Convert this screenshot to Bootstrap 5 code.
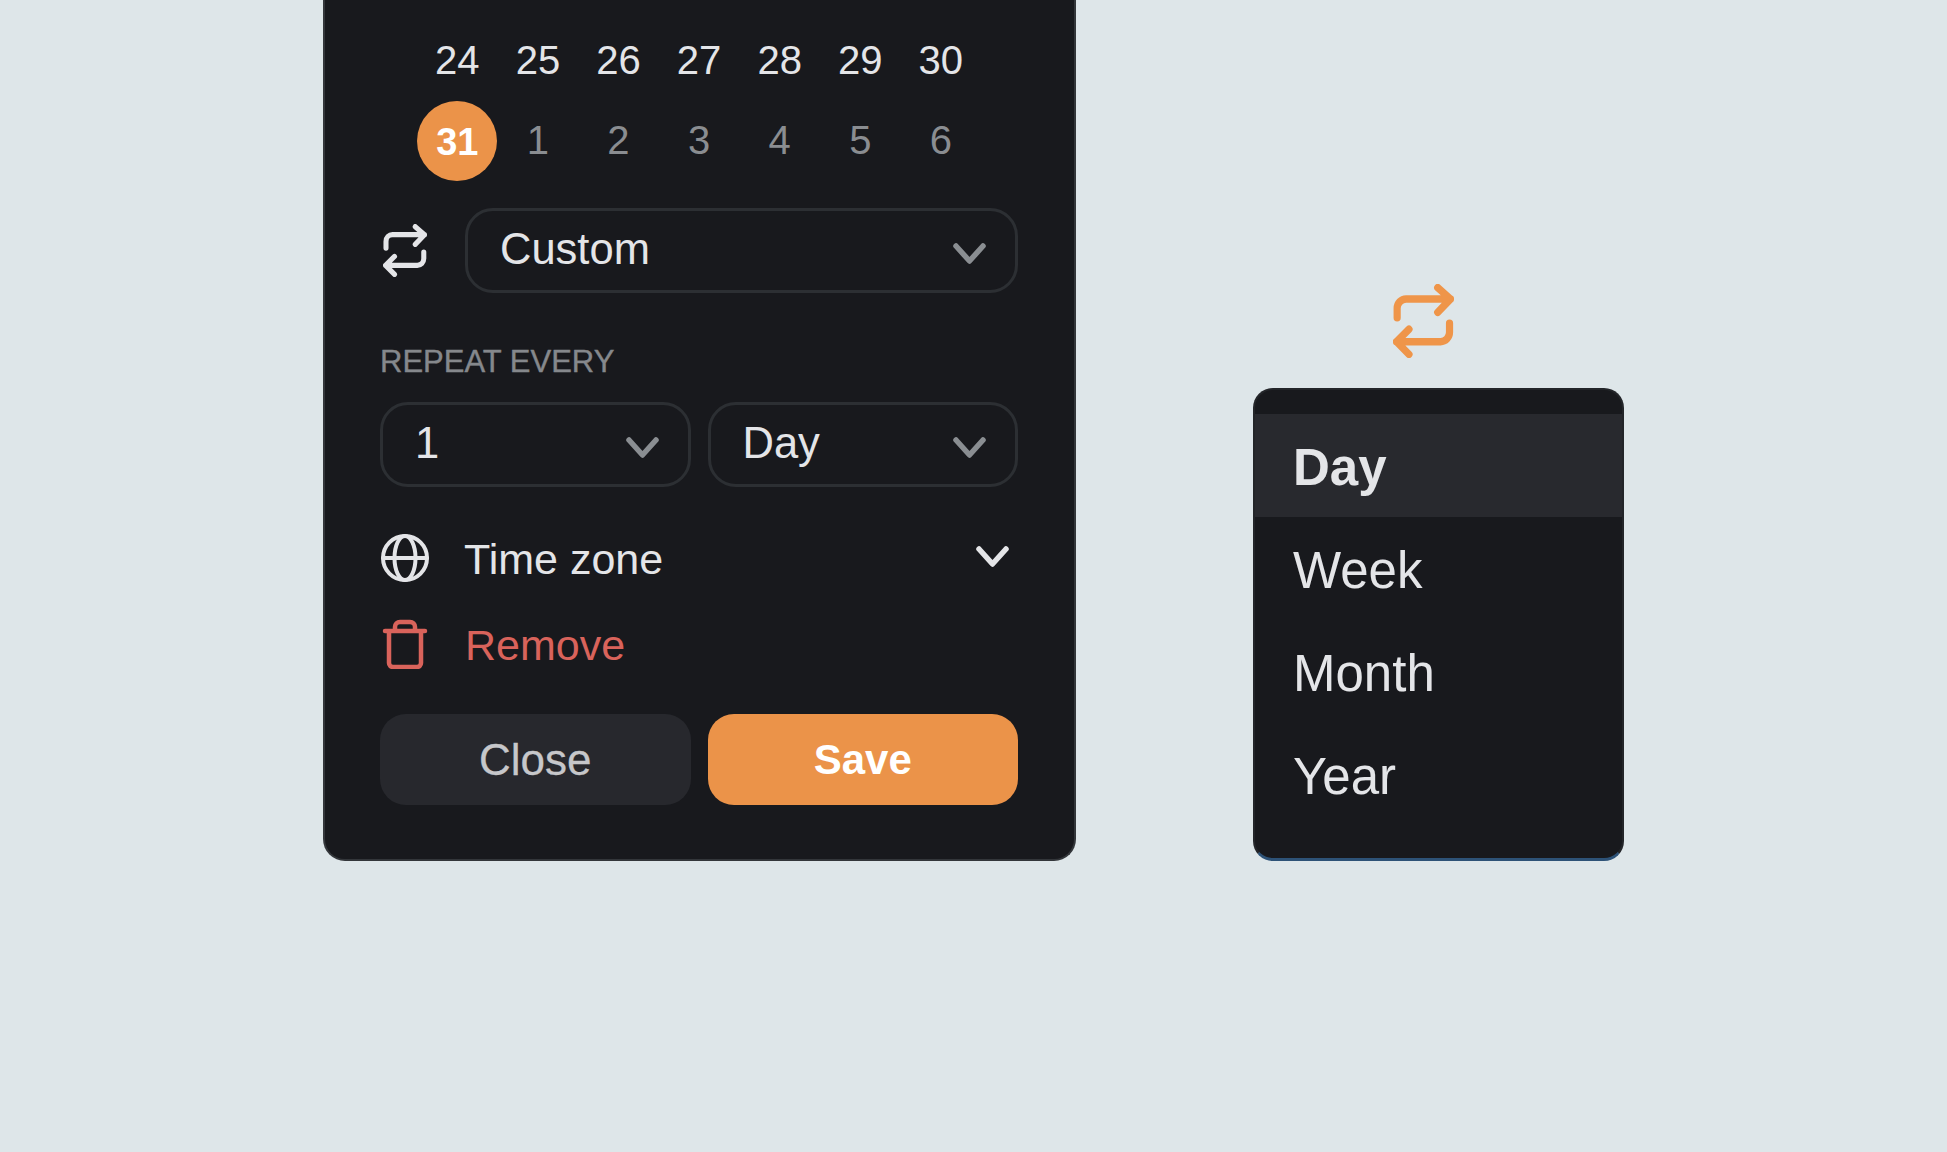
<!DOCTYPE html>
<html lang="en">
<head>
<meta charset="utf-8">
<title>Repeat picker</title>
<link rel="stylesheet" href="https://cdn.jsdelivr.net/npm/bootstrap@5.3.0/dist/css/bootstrap.min.css">
<style>
html,body{height:100%;margin:0}
body{background:#dee6e9;font-family:"Liberation Sans",Arial,sans-serif;color:#e4e5e8;overflow:hidden}
.stage{height:1152px;width:1947px;padding-left:323px;padding-right:322px;align-items:flex-end;padding-bottom:291px;gap:177px}
.panel{width:753px;height:861px;background:#18191d;border:2px solid #33363a;border-top:0;border-radius:0 0 22px 22px;padding:0 56px 0 55px;flex:none}
.cal-row{display:grid;grid-template-columns:repeat(7,80.6px);padding-left:37px;height:81px;align-items:center;font-size:40px;line-height:1;text-align:center}
.cal-first{margin-top:19px}
.muted-days{color:#8a8d91;margin-top:-2px}
.today{width:80px;height:80px;border-radius:50%;background:#eb9349;color:#fff;font-weight:700;font-size:38px;margin:auto;padding-top:3px}
.ico{flex:none;fill:none;stroke:currentColor;stroke-linecap:round;stroke-linejoin:round}
.rowline{display:flex;align-items:center}
.pick{height:85px;border:3px solid #2c2f33;border-radius:28px;font-size:43.500px;line-height:1;padding:0 29px 1px 32px;display:flex;align-items:center;justify-content:space-between;background:transparent;color:#e4e5e8}
.chev{width:33px;height:21px;stroke:#8a8e92;stroke-width:5.500;fill:none;stroke-linecap:round;stroke-linejoin:round;margin-top:7px}
.first-select{margin-top:27px}
.first-select .pick{flex:1}
.swap-w{margin:0 38px 0 3px}
.label-rep{font-size:31px;line-height:1;color:#85888c;margin:53px 0 0;text-transform:uppercase;-webkit-text-stroke:.4px #85888c}
.twin{display:grid;grid-template-columns:1fr 1fr;gap:17px;margin-top:25px}
.tz{margin-top:48px;font-size:43px;line-height:1;height:48px}
.rem{margin-top:37px;font-size:43px;line-height:1;height:50px;color:#d9635b}
.tz span{margin-left:35px;flex:1}
.rem span{margin-left:37px}
.rem svg{margin:-3px 0 0 2px}
.tz svg.ico{margin:-2px 0 0 1px}
.tz .chev{stroke:#e4e5e8;margin:-6px 9px 0 0}
.actions{display:grid;grid-template-columns:1fr 1fr;gap:17px;margin-top:44px}
.act{height:91px;border-radius:26px;border:0;font-size:42px;padding:0;line-height:1}
.act-close{background:#27282d;color:#c6c7ca;font-size:44px;-webkit-text-stroke:.3px #c6c7ca}
.act-save{background:#eb9349;color:#fff;font-weight:700}
.side{width:371px;flex:none}
.side-ico{display:block;margin:0 0 30px 140px;color:#ef9549}
.menu-box{width:371px;height:473px;background:#18191d;border-radius:20px;border:2px solid #232529;border-bottom:3px solid #2d5277;padding-top:24px;font-size:51px;overflow:hidden}
.opt{height:103px;display:flex;align-items:center;padding:3px 0 0 38px;line-height:1;color:#e4e5e8}
.opt-on{background:#28292e;font-weight:700}
</style>
</head>
<body>
<svg width="0" height="0" class="position-absolute">
<symbol id="rep" viewBox="35 27 191 222" preserveAspectRatio="none"><path d="M48 128V100a28 28 0 0 1 28-28H215M175 38l40 34-40 40M212 145v27a28 28 0 0 1-28 28H46M85 163l-39 37 39 38"/></symbol>
</svg>
<main class="stage d-flex">
<section class="panel">
  <div class="cal-row cal-first"><div>24</div><div>25</div><div>26</div><div>27</div><div>28</div><div>29</div><div>30</div></div>
  <div class="cal-row"><div class="today d-flex align-items-center justify-content-center">31</div><div class="muted-days">1</div><div class="muted-days">2</div><div class="muted-days">3</div><div class="muted-days">4</div><div class="muted-days">5</div><div class="muted-days">6</div></div>
  <div class="rowline first-select">
    <svg class="ico swap-w" width="44" height="53" stroke-width="22"><use href="#rep"/></svg>
    <div class="pick"><span>Custom</span><svg class="chev" viewBox="0 0 33 21"><path d="M3 3l13.500 15L30 3"/></svg></div>
  </div>
  <div class="label-rep">Repeat every</div>
  <div class="twin">
    <div class="pick"><span>1</span><svg class="chev" viewBox="0 0 33 21"><path d="M3 3l13.500 15L30 3"/></svg></div>
    <div class="pick"><span>Day</span><svg class="chev" viewBox="0 0 33 21"><path d="M3 3l13.500 15L30 3"/></svg></div>
  </div>
  <div class="rowline tz">
    <svg class="ico" width="48" height="48" viewBox="0 0 48 48" stroke-width="4"><circle cx="24" cy="24" r="22"/><ellipse cx="24" cy="24" rx="10.500" ry="22"/><path d="M2 24h44"/></svg>
    <span>Time zone</span>
    <svg class="chev" viewBox="0 0 33 21"><path d="M3 3l13.500 15L30 3"/></svg>
  </div>
  <div class="rowline rem">
    <svg class="ico" width="46" height="50" viewBox="0 0 46 50" stroke-width="4.500"><path d="M3 12h40M7 12v32a4 4 0 0 0 4 4h24a4 4 0 0 0 4-4V12M13 12V8a5 5 0 0 1 5-5h10a5 5 0 0 1 5 5v4"/></svg>
    <span>Remove</span>
  </div>
  <div class="actions">
    <button type="button" class="btn act act-close">Close</button>
    <button type="button" class="btn act act-save">Save</button>
  </div>
</section>
<aside class="side">
  <svg class="ico side-ico" width="61" height="74" stroke-width="22.500"><use href="#rep"/></svg>
  <div class="menu-box">
    <div class="opt opt-on">Day</div>
    <div class="opt">Week</div>
    <div class="opt">Month</div>
    <div class="opt">Year</div>
  </div>
</aside>
</main>
<script src="https://cdn.jsdelivr.net/npm/bootstrap@5.3.0/dist/js/bootstrap.bundle.min.js"></script>
</body>
</html>
